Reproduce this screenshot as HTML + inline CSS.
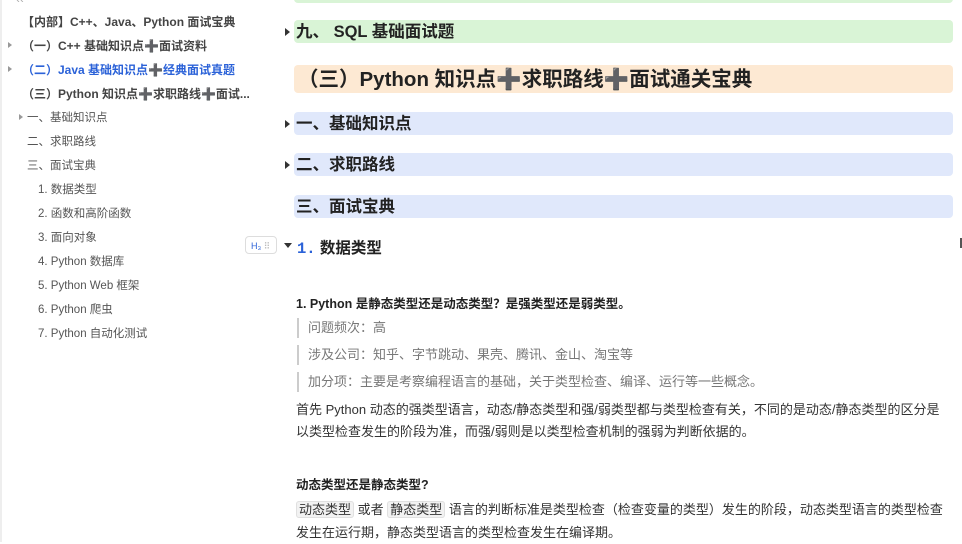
<!DOCTYPE html>
<html><head><meta charset="utf-8"><style>
body{margin:0;width:962px;height:542px;overflow:hidden;background:#fff;font-family:"Liberation Sans","Noto Sans CJK SC",sans-serif;position:relative}
.a{position:absolute;white-space:nowrap}
.sb{font-size:11.5px;color:#555}
.sbb{font-size:12px;font-weight:bold;color:#444}
.tri{position:absolute;width:0;height:0;border-left:4px solid #999;border-top:3px solid transparent;border-bottom:3px solid transparent}
.bar{position:absolute;left:294px;width:659px;border-radius:4px;font-weight:bold;color:#222}
.t2{width:0;height:0;border-left:5px solid #333;border-top:4px solid transparent;border-bottom:4px solid transparent;position:absolute}
.q{position:absolute;left:297px;border-left:2px solid #ccc;padding-left:9px;font-size:13px;color:#777;height:20px;line-height:20px}
.p{font-size:13px;color:#333}
.c{background:#f2f2f2;border:1px solid #e0e0e0;border-radius:3px;padding:0 2px}
</style></head><body>
<div style="position:absolute;left:0;top:0;width:2px;height:542px;background:#eee"></div>
<div class="a sb" style="left:16px;top:-6px;color:#aaa">‹‹</div>
<div class="a sbb" style="left:22px;top:13px">【内部】C++、Java、Python 面试宝典</div>
<div class="tri" style="left:8px;top:42px"></div>
<div class="a sbb" style="left:22px;top:37px">（一）C++ 基础知识点➕面试资料</div>
<div class="tri" style="left:8px;top:66px"></div>
<div class="a sbb" style="left:22px;top:61px;color:#2b62d8">（二）Java 基础知识点➕经典面试真题</div>
<div class="a sbb" style="left:22px;top:85px">（三）Python 知识点➕求职路线➕面试...</div>
<div class="tri" style="left:19px;top:114px"></div>
<div class="a sb" style="left:27px;top:109px">一、基础知识点</div>
<div class="a sb" style="left:27px;top:133px">二、求职路线</div>
<div class="a sb" style="left:27px;top:157px">三、面试宝典</div>
<div class="a sb" style="left:38px;top:181px">1. 数据类型</div>
<div class="a sb" style="left:38px;top:205px">2. 函数和高阶函数</div>
<div class="a sb" style="left:38px;top:229px">3. 面向对象</div>
<div class="a sb" style="left:38px;top:253px">4. Python 数据库</div>
<div class="a sb" style="left:38px;top:277px">5. Python Web 框架</div>
<div class="a sb" style="left:38px;top:301px">6. Python 爬虫</div>
<div class="a sb" style="left:38px;top:325px">7. Python 自动化测试</div>

<div class="bar" style="top:-20px;height:23px;background:#d9f4d6"></div>
<div class="t2" style="left:285px;top:28px"></div>
<div class="bar" style="top:20px;height:23px;background:#d9f4d6;font-size:16.5px;line-height:24px;padding-left:2px;box-sizing:border-box">九、 SQL 基础面试题</div>
<div class="bar" style="top:65px;height:28px;background:#fde9d3;font-size:20.5px;line-height:30px;padding-left:4px;box-sizing:border-box">（三）Python 知识点➕求职路线➕面试通关宝典</div>
<div class="t2" style="left:285px;top:120px"></div>
<div class="bar" style="top:112px;height:23px;background:#e0e8fb;font-size:16.5px;line-height:25px;padding-left:2px;box-sizing:border-box">一、基础知识点</div>
<div class="t2" style="left:285px;top:161px"></div>
<div class="bar" style="top:153px;height:23px;background:#e0e8fb;font-size:16.5px;line-height:25px;padding-left:2px;box-sizing:border-box">二、求职路线</div>
<div class="bar" style="top:195px;height:23px;background:#e0e8fb;font-size:16.5px;line-height:25px;padding-left:2px;box-sizing:border-box">三、面试宝典</div>

<div class="a" style="left:245px;top:236px;width:32px;height:18px;border:1px solid #ddd;border-radius:4px;font-size:9px;color:#2b62d8;line-height:18px;padding-left:5px;box-sizing:border-box">H₃ <span style="color:#bbb">⠿</span></div>
<div style="position:absolute;left:284px;top:243px;width:0;height:0;border-top:5px solid #333;border-left:4px solid transparent;border-right:4px solid transparent"></div>
<div class="a" style="left:297px;top:236px;font-size:15.5px;color:#222;font-weight:bold"><span style="color:#2b62d8;font-family:'Liberation Mono',monospace">1.</span> 数据类型</div>

<div class="a" style="left:296px;top:293px;font-size:12.5px;font-weight:bold;color:#222">1. Python 是静态类型还是动态类型？是强类型还是弱类型。</div>
<div class="q" style="top:318px">问题频次：高</div>
<div class="q" style="top:345px">涉及公司：知乎、字节跳动、果壳、腾讯、金山、淘宝等</div>
<div class="q" style="top:372px">加分项：主要是考察编程语言的基础，关于类型检查、编译、运行等一些概念。</div>
<div class="a p" style="left:296px;top:399px;line-height:22px">首先 Python 动态的强类型语言，动态/静态类型和强/弱类型都与类型检查有关，不同的是动态/静态类型的区分是<br>以类型检查发生的阶段为准，而强/弱则是以类型检查机制的强弱为判断依据的。</div>
<div class="a" style="left:296px;top:474px;font-size:12.5px;font-weight:bold;color:#222">动态类型还是静态类型?</div>
<div class="a p" style="left:296px;top:498px;line-height:23px"><span class="c">动态类型</span> 或者 <span class="c">静态类型</span> 语言的判断标准是类型检查（检查变量的类型）发生的阶段，动态类型语言的类型检查<br>发生在运行期，静态类型语言的类型检查发生在编译期。</div>
<div style="position:absolute;left:960px;top:238px;width:2px;height:10px;background:#555"></div>
</body></html>
